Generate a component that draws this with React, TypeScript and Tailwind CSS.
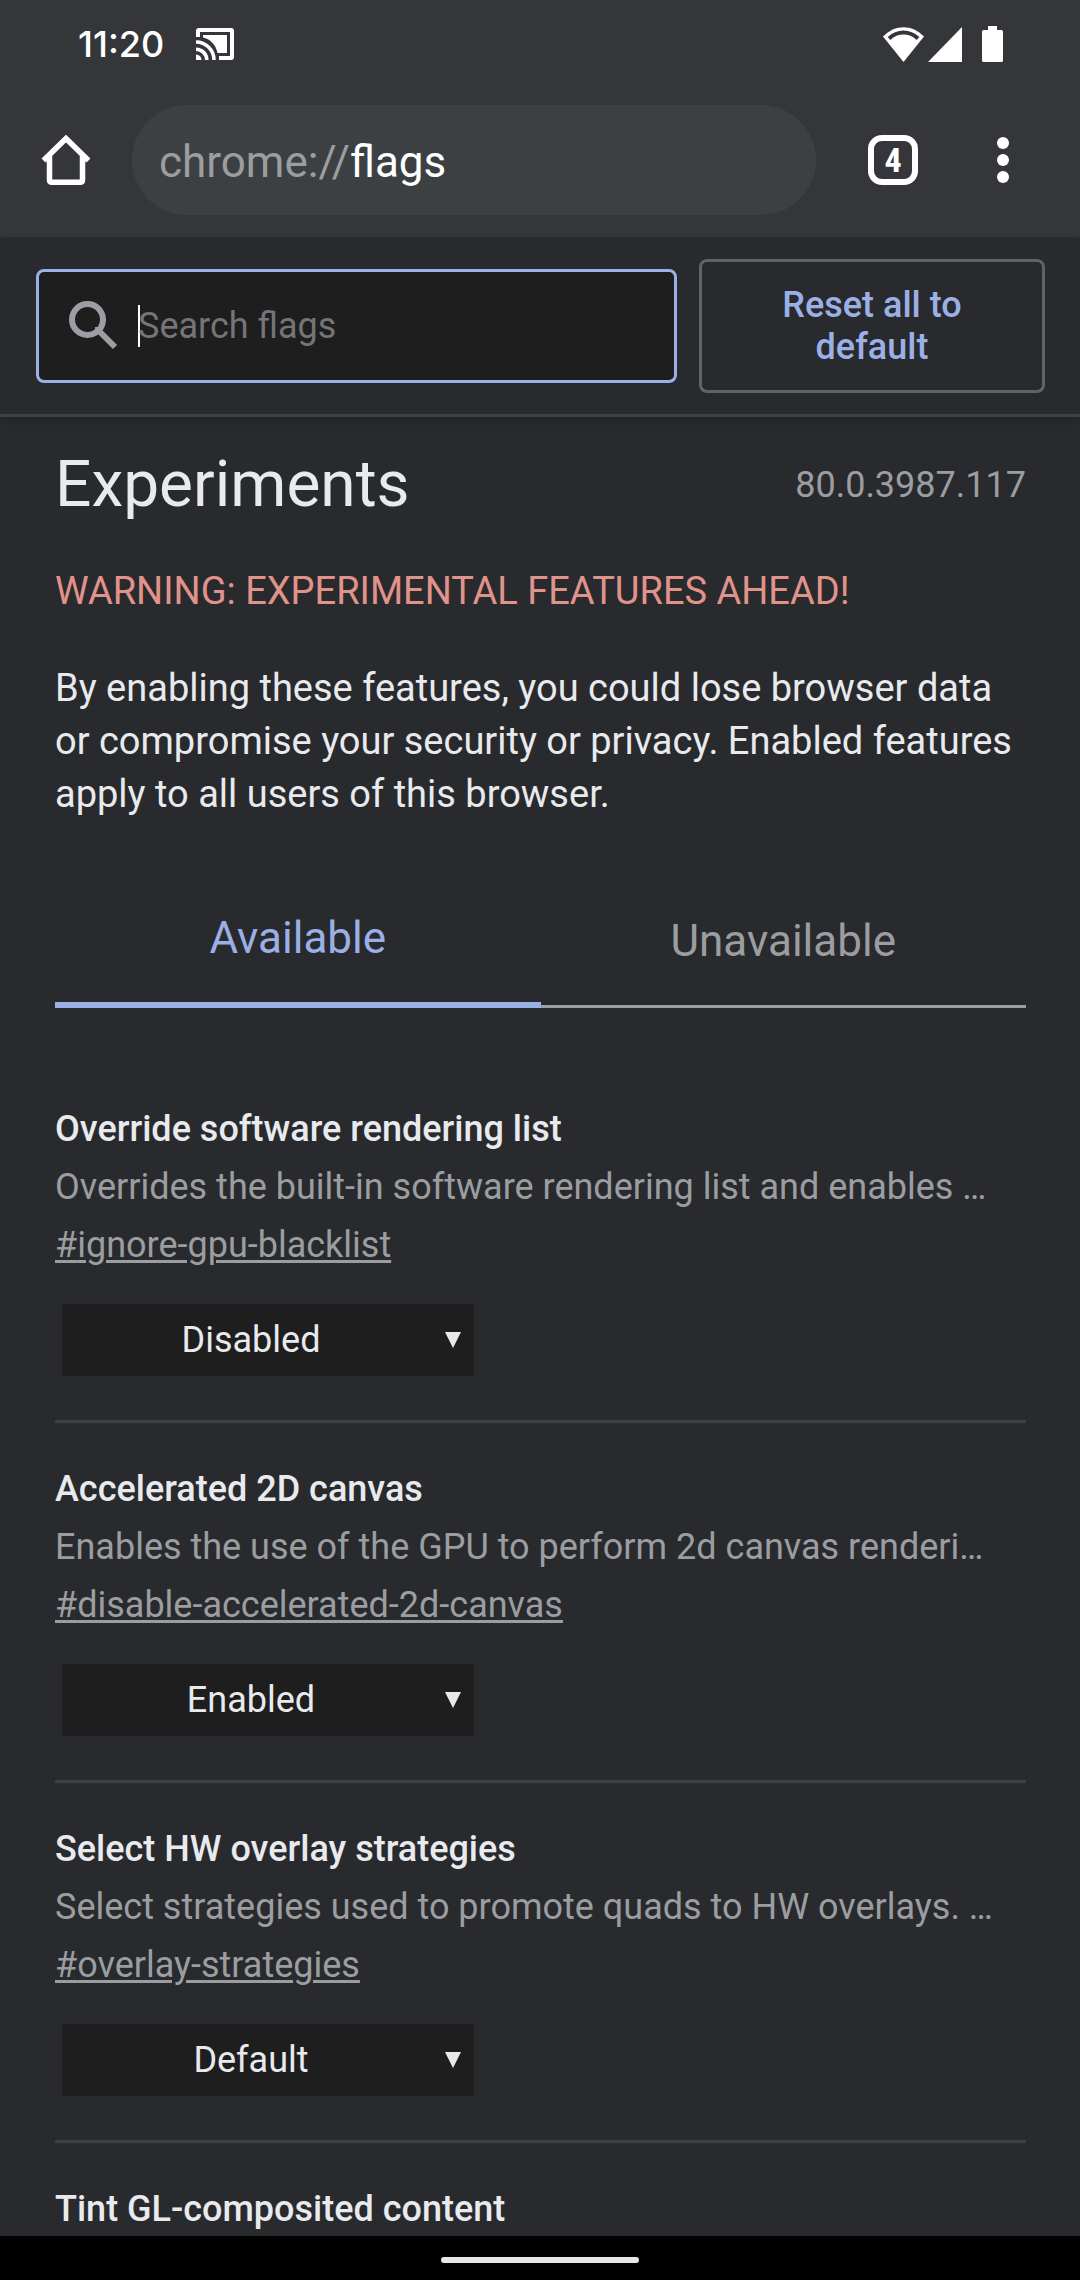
import React from "react";

type Flag = {
  id: string;
  title: string;
  description: string;
  value: string;
};

const flags: Flag[] = [
  {
    id: "ignore-gpu-blacklist",
    title: "Override software rendering list",
    description: "Overrides the built-in software rendering list and enables …",
    value: "Disabled",
  },
  {
    id: "disable-accelerated-2d-canvas",
    title: "Accelerated 2D canvas",
    description: "Enables the use of the GPU to perform 2d canvas renderi…",
    value: "Enabled",
  },
  {
    id: "overlay-strategies",
    title: "Select HW overlay strategies",
    description: "Select strategies used to promote quads to HW overlays. …",
    value: "Default",
  },
];

function CastIcon() {
  return (
    <svg width="38" height="32" viewBox="0 0 38 32" fill="#fff" aria-hidden="true">
      <path d="M3 0H35A3 3 0 0 1 38 3V29A3 3 0 0 1 35 32H23V28H34V4H4V9H0V3A3 3 0 0 1 3 0Z" />
      <path d="M7 7H31V25H21.500C20 17 14 10.500 7 9.500Z" />
      <path d="M0 26.500A5.500 5.500 0 0 1 5.500 32H0Z" />
      <path
        d="M0 21.200A10.800 10.800 0 0 1 10.800 32M0 14A18 18 0 0 1 18 32"
        fill="none"
        stroke="#fff"
        strokeWidth="3.600"
      />
    </svg>
  );
}

function WifiIcon() {
  return (
    <svg width="41" height="35" viewBox="0 0 41 35" aria-hidden="true">
      <path d="M0 9.500C12 -3 29 -3 41 9.500L20.500 35Z" fill="#fff" />
      <path d="M6 11.500C14.500 3.500 26.500 3.500 35 11.500" fill="none" stroke="#35363a" strokeWidth="4" />
    </svg>
  );
}

function SignalIcon() {
  return (
    <svg width="34" height="35" viewBox="0 0 34 35" aria-hidden="true">
      <path d="M34 0V35H0Z" fill="#fff" />
    </svg>
  );
}

function BatteryIcon() {
  return (
    <svg width="21" height="36" viewBox="0 0 21 36" aria-hidden="true">
      <path
        d="M6 0H15V4H19.500A1.500 1.500 0 0 1 21 5.500V34.500A1.500 1.500 0 0 1 19.500 36H1.500A1.500 1.500 0 0 1 0 34.500V5.500A1.500 1.500 0 0 1 1.500 4H6Z"
        fill="#fff"
      />
    </svg>
  );
}

function HomeIcon() {
  return (
    <svg width="50" height="50" viewBox="0 0 50 50" fill="none" stroke="#fff" aria-hidden="true">
      <path
        d="M2.500 25.500L25 3.500L47.500 25.500M8.500 20V45Q8.500 47.300 11 47.300H39Q41.500 47.300 41.500 45V20"
        strokeWidth="5.500"
      />
    </svg>
  );
}

function MenuDots() {
  return (
    <svg width="12" height="46" viewBox="0 0 12 46" fill="#fff" aria-hidden="true">
      <circle cx="6" cy="6" r="6" />
      <circle cx="6" cy="23" r="6" />
      <circle cx="6" cy="40" r="6" />
    </svg>
  );
}

function SearchIcon() {
  return (
    <svg width="50" height="50" viewBox="0 0 50 50" fill="none" stroke="#9b9ea3" aria-hidden="true">
      <circle cx="18.500" cy="18.500" r="15.500" strokeWidth="6" />
      <path d="M29 29L46 46" strokeWidth="6" />
      <path d="M28 31V28H31" strokeWidth="4" />
    </svg>
  );
}

function StatusBar() {
  return (
    <div className="flex h-22 items-center justify-between pr-[77px] pl-[78px]">
      <div className="flex items-center gap-8">
        <span className="font-['Inter'] text-[36px] leading-10 font-medium text-white">11:20</span>
        <CastIcon />
      </div>
      <div className="flex items-center">
        <WifiIcon />
        <span className="ml-1">
          <SignalIcon />
        </span>
        <span className="ml-5">
          <BatteryIcon />
        </span>
      </div>
    </div>
  );
}

function Toolbar() {
  return (
    <div className="flex items-center pt-[17px] pr-[71px] pb-[22px] pl-[41px]">
      <button type="button" aria-label="Home" className="shrink-0">
        <HomeIcon />
      </button>
      <div className="ml-[41px] flex h-[110px] min-w-0 flex-1 items-center rounded-full bg-[#3c4043] px-[27px] pt-1 text-[44px] leading-[52px]">
        <span className="text-[#9b9ea1]">chrome://</span>
        <span className="text-white">flags</span>
      </div>
      <button
        type="button"
        aria-label="4 open tabs"
        className="ml-[52px] flex size-[50px] shrink-0 items-center justify-center rounded-[14px] border-6 border-white font-['Roboto_Condensed','Roboto'] text-[34px] leading-9 font-bold text-white"
      >
        4
      </button>
      <button type="button" aria-label="Menu" className="ml-[79px] shrink-0">
        <MenuDots />
      </button>
    </div>
  );
}

function SearchRow() {
  return (
    <div className="flex items-center gap-[22px] border-b-3 border-[#3e4044] pt-[21px] pr-[35px] pb-[21px] pl-9 shadow-[0_2px_8px_rgba(0,0,0,0.25)]">
      <div className="flex h-[114px] min-w-0 flex-1 items-center rounded-lg border-3 border-[#9ab0e6] bg-[#1e1e1f] pl-[30px]">
        <label htmlFor="flag-search" aria-label="Search flags">
          <SearchIcon />
        </label>
        <span className="ml-[19px] h-[42px] w-[2px] shrink-0 bg-white" />
        <input
          id="flag-search"
          type="text"
          placeholder="Search flags"
          className="-ml-[2px] min-w-0 flex-1 bg-transparent text-[36px] leading-[42px] text-[#e8eaed] outline-none placeholder:text-[#757577]"
        />
      </div>
      <button
        type="button"
        className="w-[346px] shrink-0 rounded-lg border-3 border-[#606266] px-[60px] py-[22px] text-center text-[36px] leading-[42px] font-medium text-[#9ab0e6]"
      >
        Reset all to default
      </button>
    </div>
  );
}

function FlagItem({ flag }: { flag: Flag }) {
  return (
    <section className="flex flex-col border-b-3 border-[#3e4044] pb-11 text-[36px] leading-[58px]">
      <h2 className="font-medium text-[#e8eaed]" id={`${flag.id}-title`}>
        {flag.title}
      </h2>
      <p className="whitespace-nowrap text-[#9b9ea1]">{flag.description}</p>
      <a
        href={`#${flag.id}`}
        className="self-start text-[#9b9ea1] underline decoration-3 underline-offset-3"
      >
        #{flag.id}
      </a>
      <div className="relative mt-[30px] ml-[7px] w-[412px]">
        <select
          aria-labelledby={`${flag.id}-title`}
          defaultValue={flag.value}
          className="block h-[72px] w-full appearance-none bg-[#1e1e1f] pr-[34px] text-center text-[36px] leading-[42px] text-[#e8eaed]"
        >
          <option>Default</option>
          <option>Enabled</option>
          <option>Disabled</option>
        </select>
        <svg
          className="pointer-events-none absolute top-7 right-[13px]"
          width="16"
          height="16"
          viewBox="0 0 16 16"
          aria-hidden="true"
        >
          <path d="M0 0H16L8 16Z" fill="#e8eaed" />
        </svg>
      </div>
    </section>
  );
}

export default function App() {
  return (
    <div className="flex h-dvh flex-col bg-[#292a2d] font-['Roboto',sans-serif] text-[#e8eaed]">
      <header className="shrink-0 border-b border-[#2e2f33] bg-[#35363a]">
        <StatusBar />
        <Toolbar />
      </header>

      <div className="shrink-0">
        <SearchRow />
      </div>

      <main className="min-h-0 flex-1 overflow-hidden pt-[30px] pr-[54px] pl-[55px]">
        <div className="flex items-center justify-between">
          <h1 className="text-[64px] leading-[76px]">Experiments</h1>
          <span className="text-[36px] leading-[42px] text-[#9b9ea1]">80.0.3987.117</span>
        </div>
        <p className="mt-[42px] text-[38px] leading-[53px] text-[#e0938a]">
          WARNING: EXPERIMENTAL FEATURES AHEAD!
        </p>
        <p className="mt-11 text-[38px] leading-[53px]">
          By enabling these features, you could lose browser data or compromise your security or
          privacy. Enabled features apply to all users of this browser.
        </p>

        <div role="tablist" className="mt-[47px] flex text-[44px] leading-[52px]">
          <button
            type="button"
            role="tab"
            aria-selected="true"
            className="flex-1 border-b-6 border-[#9ab0e6] pt-11 pb-[38px] text-[#9ab0e6]"
          >
            Available
          </button>
          <button
            type="button"
            role="tab"
            aria-selected="false"
            className="flex-1 border-b-3 border-[#9b9ea1] pt-[46px] pb-[38px] text-[#9b9ea1]"
          >
            Unavailable
          </button>
        </div>

        <div className="mt-[92px] flex flex-col gap-[37px]">
          {flags.map((flag) => (
            <FlagItem key={flag.id} flag={flag} />
          ))}
          <h2 className="text-[36px] leading-[58px] font-medium">Tint GL-composited content</h2>
        </div>
      </main>

      <nav className="flex h-11 shrink-0 items-center justify-center bg-black pt-1" aria-label="System navigation">
        <span className="h-[6px] w-[198px] rounded-full bg-[#e8e8e8]" />
      </nav>
    </div>
  );
}
